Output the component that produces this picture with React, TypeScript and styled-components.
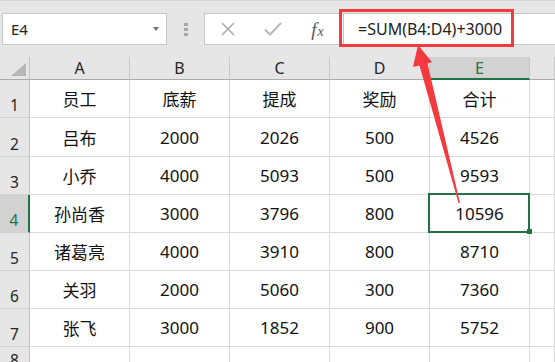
import styled, { createGlobalStyle } from 'styled-components';

const GlobalStyle = createGlobalStyle`
  html, body {
    margin: 0;
    padding: 0;
    background: #ffffff;
    overflow: hidden;
  }
  body {
    font-family: 'Noto Sans', 'Noto Sans CJK SC', sans-serif;
  }
`;

const GREEN = '#217346';

const columns = ['A', 'B', 'C', 'D', 'E'];

// 表格数据：第一行为标题
const rows: string[][] = [
  ['员工', '底薪', '提成', '奖励', '合计'],
  ['吕布', '2000', '2026', '500', '4526'],
  ['小乔', '4000', '5093', '500', '9593'],
  ['孙尚香', '3000', '3796', '800', '10596'],
  ['诸葛亮', '4000', '3910', '800', '8710'],
  ['关羽', '2000', '5060', '300', '7360'],
  ['张飞', '3000', '1852', '900', '5752'],
  ['', '', '', '', ''],
];

const selectedCol = 4; // E
const selectedRow = 3; // 4

const App = () => {
  return (
    <Page>
      <GlobalStyle />
      <FormulaBar>
        <NameBox>
          E4
          <Caret />
        </NameBox>
        <Grip>
          <Dot />
          <Dot />
          <Dot />
        </Grip>
        <ButtonsBox>
          <IconSlot>
            <svg width="14" height="14" viewBox="0 0 14 14">
              <path d="M1 1 L13 13 M13 1 L1 13" stroke="#ababab" strokeWidth="1.5" fill="none" />
            </svg>
          </IconSlot>
          <IconSlot>
            <svg width="18" height="14" viewBox="0 0 18 14">
              <path d="M1 7.5 L6 12.5 L17 1" stroke="#b8b8b8" strokeWidth="2" fill="none" />
            </svg>
          </IconSlot>
          <IconSlot>
            <Fx>
              f<small>x</small>
            </Fx>
          </IconSlot>
        </ButtonsBox>
        <FormulaInput>=SUM(B4:D4)+3000</FormulaInput>
      </FormulaBar>

      <Sheet>
        <Corner />
        {columns.map((c, i) => (
          <ColHeader key={c} $selected={i === selectedCol}>
            {c}
          </ColHeader>
        ))}
        <ColHeader $selected={false} />
        {rows.map((row, r) => (
          <SheetRow key={r}>
            <RowHeader $selected={r === selectedRow}>{r + 1}</RowHeader>
            {row.map((value, c) => (
              <Cell key={c} $active={r === selectedRow && c === selectedCol}>
                {value}
              </Cell>
            ))}
            <Cell $active={false} />
          </SheetRow>
        ))}
      </Sheet>

      <Callout />
      <Arrow viewBox="0 0 555 362" width="555" height="362">
        <polygon
          points="418,45 432,62 427.5,63.5 460,203 458.5,203 419.5,65.5 413,67"
          fill="#f43a3f"
        />
      </Arrow>
    </Page>
  );
};

export default App;

const Page = styled.div`
  position: relative;
  width: 555px;
  height: 362px;
  overflow: hidden;
  background: #ffffff;
`;

const FormulaBar = styled.div`
  display: flex;
  align-items: flex-start;
  height: 57px;
  box-sizing: border-box;
  padding-top: 13px;
  background: #e6e6e6;
  border-top: 1px solid #d6d6d6;
  padding-top: 12px;
`;

const NameBox = styled.div`
  display: flex;
  align-items: center;
  justify-content: space-between;
  box-sizing: border-box;
  width: 165px;
  height: 32px;
  margin-left: 2px;
  padding: 0 7px 0 8px;
  background: #ffffff;
  border: 1px solid #c6c6c6;
  color: #222222;
  font-size: 15px;
`;

const Caret = styled.span`
  width: 0;
  height: 0;
  border-left: 3.5px solid transparent;
  border-right: 3.5px solid transparent;
  border-top: 4px solid #707070;
`;

const Grip = styled.div`
  display: flex;
  flex-direction: column;
  align-items: center;
  justify-content: center;
  gap: 2px;
  width: 37px;
  height: 32px;
`;

const Dot = styled.span`
  width: 4px;
  height: 3px;
  background: #a9a9a9;
`;

const ButtonsBox = styled.div`
  display: flex;
  align-items: center;
  box-sizing: border-box;
  width: 140px;
  height: 32px;
  padding-left: 0;
  background: #ffffff;
  border: 1px solid #c6c6c6;
`;

const IconSlot = styled.div`
  display: flex;
  align-items: center;
  justify-content: center;
  width: 45px;
  height: 100%;
`;

const Fx = styled.span`
  font-family: 'Liberation Serif', 'DejaVu Serif', serif;
  font-style: italic;
  font-size: 19px;
  color: #555555;
  line-height: 1;

  small {
    font-size: 14px;
    margin-left: 1px;
  }
`;

const FormulaInput = styled.div`
  display: flex;
  align-items: center;
  flex: 1;
  box-sizing: border-box;
  height: 32px;
  margin-right: -4px;
  padding-left: 14px;
  background: #ffffff;
  border: 1px solid #c6c6c6;
  border-left: none;
  color: #222222;
  font-size: 16px;
`;

const Sheet = styled.div`
  display: grid;
  grid-template-columns: 30px repeat(5, 100px) 1fr;
  grid-template-rows: 23px 38px 39px 38px 38px 38px 38px 38px 26px;
`;

const SheetRow = styled.div`
  display: contents;
`;

const Corner = styled.div`
  position: relative;
  box-sizing: border-box;
  background: #e6e6e6;
  border-right: 1px solid #c4c4c4;
  border-bottom: 1px solid #ababab;

  &::after {
    content: '';
    position: absolute;
    right: 3px;
    bottom: 3px;
    width: 15px;
    height: 13px;
    background: #b7b7b7;
    clip-path: polygon(100% 0, 100% 100%, 0 100%);
  }
`;

const ColHeader = styled.div<{ $selected: boolean }>`
  display: flex;
  align-items: center;
  justify-content: center;
  box-sizing: border-box;
  background: ${(p) => (p.$selected ? '#d2d2d2' : '#e6e6e6')};
  border-right: 1px solid #c8c8c8;
  border-bottom: ${(p) => (p.$selected ? `2px solid ${GREEN}` : '1px solid #ababab')};
  color: ${(p) => (p.$selected ? GREEN : '#262626')};
  font-size: 16px;
  line-height: 1;
  padding-top: ${(p) => (p.$selected ? '1px' : '0')};
`;

const RowHeader = styled.div<{ $selected: boolean }>`
  display: flex;
  align-items: flex-end;
  justify-content: center;
  box-sizing: border-box;
  padding-bottom: 2px;
  background: ${(p) => (p.$selected ? '#d2d2d2' : '#e6e6e6')};
  border-right: ${(p) => (p.$selected ? `2px solid ${GREEN}` : '1px solid #c4c4c4')};
  border-bottom: 1px solid #d0d0d0;
  color: ${(p) => (p.$selected ? GREEN : '#262626')};
  font-size: 15.5px;
  line-height: 20px;
`;

const Cell = styled.div<{ $active: boolean }>`
  position: relative;
  display: flex;
  align-items: center;
  justify-content: center;
  box-sizing: border-box;
  border-right: 1px solid #d9d9d9;
  border-bottom: 1px solid #d9d9d9;
  color: #111111;
  font-size: 17px;
  z-index: ${(p) => (p.$active ? 2 : 'auto')};

  ${(p) =>
    p.$active &&
    `
    &::before {
      content: '';
      position: absolute;
      left: -2px;
      top: -2px;
      right: -1px;
      bottom: -1px;
      border: 2px solid ${GREEN};
    }
    &::after {
      content: '';
      position: absolute;
      right: -3px;
      bottom: -2px;
      width: 5px;
      height: 5px;
      background: ${GREEN};
    }
  `}
`;

const Callout = styled.div`
  position: absolute;
  left: 339px;
  top: 9px;
  width: 175px;
  height: 38px;
  box-sizing: border-box;
  border: 3px solid #f23a3f;
  z-index: 5;
`;

const Arrow = styled.svg`
  position: absolute;
  left: 0;
  top: 0;
  pointer-events: none;
  z-index: 6;
`;
